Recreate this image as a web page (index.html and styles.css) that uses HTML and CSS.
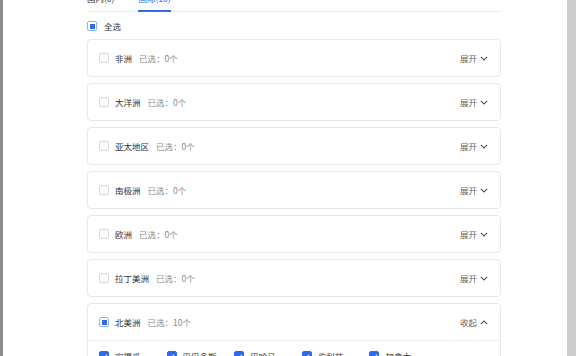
FILE: index.html
```html
<!DOCTYPE html>
<html lang="zh">
<head>
<meta charset="utf-8">
<link rel="stylesheet" href="styles.css">
</head>
<body>
<div class="frame">
  <div class="strip-left"></div>
  <main class="panel">
    <div class="tabs">
      <div class="tab">国内(0)</div>
      <div class="tab active">国际(10)</div>
    </div>
    <label class="select-all">
      <span class="cb indeterminate"></span>
      <span class="label">全选</span>
    </label>
    <div class="list">
      <div class="card">
        <div class="card-head">
          <span class="cb"></span>
          <span class="name">非洲</span>
          <span class="count">已选：0个</span>
          <span class="toggle">展开<svg class="chev" viewBox="0 0 8 5" width="8" height="5"><polyline points="0.8,0.8 4,4 7.2,0.8"/></svg></span>
        </div>
      </div>
      <div class="card">
        <div class="card-head">
          <span class="cb"></span>
          <span class="name">大洋洲</span>
          <span class="count">已选：0个</span>
          <span class="toggle">展开<svg class="chev" viewBox="0 0 8 5" width="8" height="5"><polyline points="0.8,0.8 4,4 7.2,0.8"/></svg></span>
        </div>
      </div>
      <div class="card">
        <div class="card-head">
          <span class="cb"></span>
          <span class="name">亚太地区</span>
          <span class="count">已选：0个</span>
          <span class="toggle">展开<svg class="chev" viewBox="0 0 8 5" width="8" height="5"><polyline points="0.8,0.8 4,4 7.2,0.8"/></svg></span>
        </div>
      </div>
      <div class="card">
        <div class="card-head">
          <span class="cb"></span>
          <span class="name">南极洲</span>
          <span class="count">已选：0个</span>
          <span class="toggle">展开<svg class="chev" viewBox="0 0 8 5" width="8" height="5"><polyline points="0.8,0.8 4,4 7.2,0.8"/></svg></span>
        </div>
      </div>
      <div class="card">
        <div class="card-head">
          <span class="cb"></span>
          <span class="name">欧洲</span>
          <span class="count">已选：0个</span>
          <span class="toggle">展开<svg class="chev" viewBox="0 0 8 5" width="8" height="5"><polyline points="0.8,0.8 4,4 7.2,0.8"/></svg></span>
        </div>
      </div>
      <div class="card">
        <div class="card-head">
          <span class="cb"></span>
          <span class="name">拉丁美洲</span>
          <span class="count">已选：0个</span>
          <span class="toggle">展开<svg class="chev" viewBox="0 0 8 5" width="8" height="5"><polyline points="0.8,0.8 4,4 7.2,0.8"/></svg></span>
        </div>
      </div>
      <div class="card">
        <div class="card-head open">
          <span class="cb indeterminate"></span>
          <span class="name">北美洲</span>
          <span class="count">已选：10个</span>
          <span class="toggle">收起<svg class="chev" viewBox="0 0 8 5" width="8" height="5"><polyline points="0.8,4.2 4,1 7.2,4.2"/></svg></span>
        </div>
        <div class="card-body">
          <label class="item"><span class="cb checked"></span><span class="label">安提瓜</span></label>
          <label class="item"><span class="cb checked"></span><span class="label">巴巴多斯</span></label>
          <label class="item"><span class="cb checked"></span><span class="label">巴哈马</span></label>
          <label class="item"><span class="cb checked"></span><span class="label">伯利兹</span></label>
          <label class="item"><span class="cb checked"></span><span class="label">加拿大</span></label>
          <label class="item"><span class="cb checked"></span><span class="label">哥斯达黎加</span></label>
          <label class="item"><span class="cb checked"></span><span class="label">古巴</span></label>
          <label class="item"><span class="cb checked"></span><span class="label">多米尼加</span></label>
          <label class="item"><span class="cb checked"></span><span class="label">墨西哥</span></label>
          <label class="item"><span class="cb checked"></span><span class="label">美国</span></label>
        </div>
      </div>
    </div>
  </main>
  <div class="strip-right"></div>
</div>
</body>
</html>
```

FILE: styles.css
```css
html, body {
  margin: 0;
  padding: 0;
  height: 100%;
  overflow: hidden;
  background: #ffffff;
}

body {
  font-family: "Noto Sans CJK SC", "Noto Sans", "Liberation Sans", sans-serif;
  font-size: 8.5px;
  color: #333333;
}

.frame {
  display: flex;
  height: 356px;
}

.strip-left {
  width: 3px;
  flex: none;
  background: #8c8c8c;
}

.strip-right {
  width: 9px;
  flex: none;
  background: #cdcdcd;
}

.panel {
  flex: 1;
  padding: 0 66px 0 84px;
  min-width: 0;
}

.tabs {
  display: flex;
  margin-top: -10px;
  border-bottom: 1px solid #e8e8e8;
  gap: 24px;
}

.tab {
  padding: 2px 0 6px;
  line-height: 12px;
  color: #333333;
  border-bottom: 2px solid transparent;
  margin-bottom: -1px;
}

.tab.active {
  color: #2f6bea;
  border-bottom-color: #2f6bea;
}

.select-all {
  display: flex;
  align-items: center;
  gap: 7px;
  height: 12px;
  margin-top: 8px;
}

.cb {
  width: 10px;
  height: 10px;
  box-sizing: border-box;
  border: 1px solid #d6d6d6;
  border-radius: 2px;
  background: #ffffff;
  flex: none;
  display: inline-flex;
  align-items: center;
  justify-content: center;
}

.cb.indeterminate {
  border-color: #8eb0f3;
}

.cb.indeterminate::after {
  content: "";
  width: 5px;
  height: 5px;
  background: #2f6bea;
}

.cb.checked {
  background: #2f6bea;
  border-color: #2f6bea;
}

.cb.checked::after {
  content: "";
  width: 2px;
  height: 4px;
  border: solid #ffffff;
  border-width: 0 1.2px 1.2px 0;
  transform: translateY(-0.5px) rotate(45deg);
}

.list {
  display: flex;
  flex-direction: column;
  gap: 6px;
  margin-top: 7px;
}

.card {
  border: 1px solid #e8e8e8;
  border-radius: 4px;
  background: #ffffff;
}

.card-head {
  display: flex;
  align-items: center;
  height: 36px;
  padding: 0 12px 0 11px;
}

.card-head.open {
  border-bottom: 1px solid #eeeeee;
}

.name {
  margin-left: 6px;
  color: #333333;
}

.count {
  margin-left: 7px;
  color: #8a8a8a;
}

.toggle {
  margin-left: auto;
  display: flex;
  align-items: center;
  gap: 3px;
  color: #666666;
}

.chev {
  fill: none;
  stroke: #555555;
  stroke-width: 1.1;
}

.card-body {
  display: grid;
  grid-template-columns: repeat(5, 67.6px);
  row-gap: 10px;
  padding: 9px 11px 10px;
}

.item {
  display: flex;
  align-items: center;
  gap: 6px;
  height: 12px;
}
```
